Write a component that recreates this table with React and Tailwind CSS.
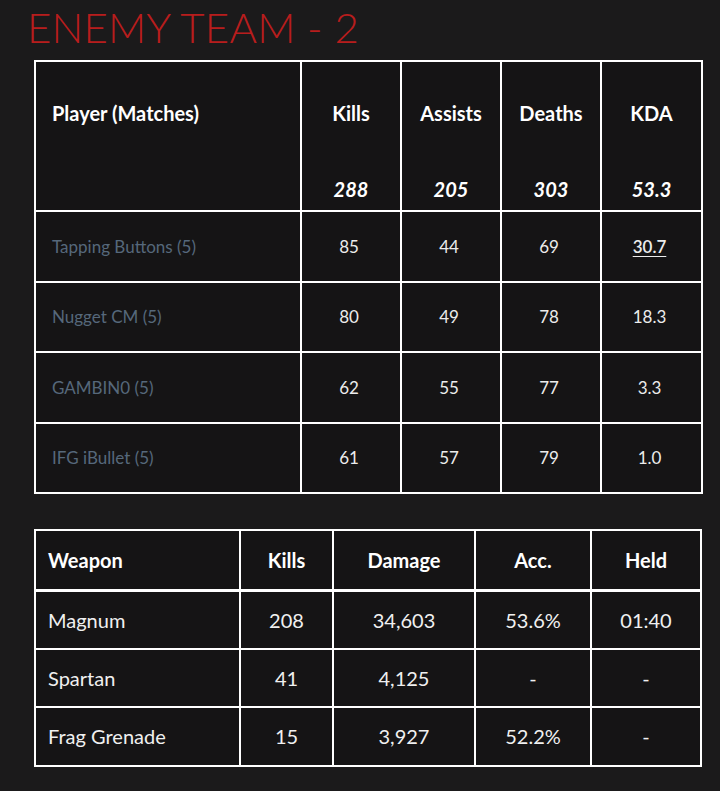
import React from "react";

const players = [
  { name: "Tapping Buttons (5)", k: "85", a: "44", d: "69", kda: "30.7", u: true },
  { name: "Nugget CM (5)", k: "80", a: "49", d: "78", kda: "18.3" },
  { name: "GAMBIN0 (5)", k: "62", a: "55", d: "77", kda: "3.3" },
  { name: "IFG iBullet (5)", k: "61", a: "57", d: "79", kda: "1.0" },
];

const weapons = [
  ["Magnum", "208", "34,603", "53.6%", "01:40"],
  ["Spartan", "41", "4,125", "-", "-"],
  ["Frag Grenade", "15", "3,927", "52.2%", "-"],
];

export default function App() {
  return (
    <div
      className="w-[720px] h-[791px] bg-[#1b1a1b] overflow-hidden"
      style={{ fontFamily: "Lato, 'Open Sans', sans-serif" }}
    >
      <h1 className="pl-[27px] pt-[3px] h-[60px] text-[42px] leading-[48px] font-light tracking-[0.2px] text-[#b81d1d]">
        ENEMY TEAM - 2
      </h1>
      <table className="ml-[34px] border-collapse border-2 border-white bg-[#151415] table-fixed w-[667px]">
        <colgroup>
          <col className="w-[266px]" />
          <col className="w-[100px]" />
          <col className="w-[100px]" />
          <col className="w-[100px]" />
          <col className="w-[101px]" />
        </colgroup>
        <thead>
          <tr className="h-[150px]">
            <th className="border-2 border-white text-left align-top pl-[16px] pt-[38px] text-white">
              <div className="text-[20px] font-bold leading-[26px]">Player (Matches)</div>
            </th>
            {[
              ["Kills", "288"],
              ["Assists", "205"],
              ["Deaths", "303"],
              ["KDA", "53.3"],
            ].map(([l, t]) => (
              <th key={l} className="border-2 border-white align-top pt-[38px] text-white">
                <div className="text-[20px] font-bold leading-[26px]">{l}</div>
                <div className="mt-[50px] text-[20px] italic font-bold leading-[26px]">{t}</div>
              </th>
            ))}
          </tr>
        </thead>
        <tbody>
          {players.map((p) => (
            <tr key={p.name} className="h-[70.5px]">
              <td className="border-2 border-white pl-[16px] text-[17px] text-[#56687b]">{p.name}</td>
              <td className="border-2 border-white text-center pr-[4px] text-[17px] text-[#ececec]">{p.k}</td>
              <td className="border-2 border-white text-center pr-[4px] text-[17px] text-[#ececec]">{p.a}</td>
              <td className="border-2 border-white text-center pr-[4px] text-[17px] text-[#ececec]">{p.d}</td>
              <td className="border-2 border-white text-center pr-[4px] text-[17px] text-[#ececec]">
                <span className={p.u ? "underline underline-offset-[3px] font-semibold" : ""}>{p.kda}</span>
              </td>
            </tr>
          ))}
        </tbody>
      </table>

      <table className="ml-[34px] mt-[35px] border-collapse border-2 border-white bg-[#151415] table-fixed w-[666px]">
        <colgroup>
          <col className="w-[205px]" />
          <col className="w-[93px]" />
          <col className="w-[142px]" />
          <col className="w-[116px]" />
          <col className="w-[110px]" />
        </colgroup>
        <thead>
          <tr className="h-[60px]">
            {["Weapon", "Kills", "Damage", "Acc.", "Held"].map((h, i) => (
              <th
                key={h}
                className={`border-2 border-b-[3px] border-white text-[20px] font-bold text-white ${
                  i === 0 ? "text-left pl-[12px]" : "text-center"
                }`}
              >
                {h}
              </th>
            ))}
          </tr>
        </thead>
        <tbody>
          {weapons.map((r) => (
            <tr key={r[0]} className="h-[58.5px]">
              {r.map((c, i) => (
                <td
                  key={i}
                  className={`border-2 border-white text-[20px] text-[#f0f0f0] ${
                    i === 0 ? "text-left pl-[12px]" : "text-center"
                  }`}
                >
                  {c}
                </td>
              ))}
            </tr>
          ))}
        </tbody>
      </table>
    </div>
  );
}
